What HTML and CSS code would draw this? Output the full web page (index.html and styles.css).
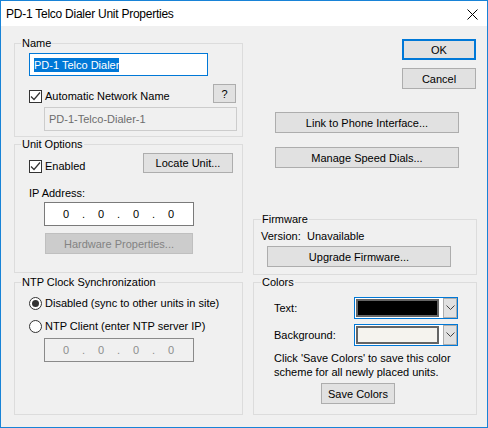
FILE: index.html
```
<!DOCTYPE html>
<html lang="en">
<head>
    <meta charset="UTF-8">
    <title>PD-1 Telco Dialer Unit Properties</title>
    <link rel="stylesheet" href="styles.css">
</head>
<body>

<div class="window">
    <div class="titlebar">
        <span class="title">PD-1 Telco Dialer Unit Properties</span>
        <span class="close">
            <svg width="11" height="11" viewBox="0 0 11 11"><path d="M0.5 0.5 L10.5 10.5 M10.5 0.5 L0.5 10.5" stroke="#000" stroke-width="1" fill="none"/></svg>
        </span>
    </div>

    <div class="content">
        <div class="col left">
            <div class="group name-group">
                <div class="group-title">Name</div>
                <div class="textbox name-input"><span class="selected">PD-1 Telco Dialer</span></div>
                <div class="auto-row">
                    <label class="check">
                        <span class="box"><svg width="11" height="11" viewBox="0 0 11 11"><path d="M1 5.5 L4 8.5 L10 1.5" stroke="#333" stroke-width="1.2" fill="none"/></svg></span>
                        Automatic Network Name
                    </label>
                    <button class="btn help-btn">?</button>
                </div>
                <div class="textbox readonly net-name">PD-1-Telco-Dialer-1</div>
            </div>

            <div class="group unit-group">
                <div class="group-title">Unit Options</div>
                <div class="unit-row">
                    <label class="check">
                        <span class="box"><svg width="11" height="11" viewBox="0 0 11 11"><path d="M1 5.5 L4 8.5 L10 1.5" stroke="#333" stroke-width="1.2" fill="none"/></svg></span>
                        Enabled
                    </label>
                    <button class="btn locate-btn">Locate Unit...</button>
                </div>
                <div class="ip-label">IP Address:</div>
                <div class="textbox ip-box">
                    <span class="oct">0</span><span class="dot">.</span><span class="oct">0</span><span class="dot">.</span><span class="oct">0</span><span class="dot">.</span><span class="oct">0</span>
                </div>
                <button class="btn disabled hw-btn">Hardware Properties...</button>
            </div>

            <div class="group ntp-group">
                <div class="group-title">NTP Clock Synchronization</div>
                <label class="radio first"><span class="circle on"></span>Disabled (sync to other units in site)</label>
                <label class="radio second"><span class="circle"></span>NTP Client (enter NTP server IP)</label>
                <div class="textbox ip-box off">
                    <span class="oct">0</span><span class="dot">.</span><span class="oct">0</span><span class="dot">.</span><span class="oct">0</span><span class="dot">.</span><span class="oct">0</span>
                </div>
            </div>
        </div>

        <div class="col side">
            <button class="btn default ok-btn">OK</button>
            <button class="btn cancel-btn">Cancel</button>
            <button class="btn wide link-btn">Link to Phone Interface...</button>
            <button class="btn wide speed-btn">Manage Speed Dials...</button>

            <div class="group firmware-group">
                <div class="group-title">Firmware</div>
                <div class="version"><span class="version-label">Version:</span>Unavailable</div>
                <button class="btn wide upgrade-btn">Upgrade Firmware...</button>
            </div>

            <div class="group colors-group">
                <div class="group-title">Colors</div>
                <div class="color-row">
                    <span class="color-label">Text:</span>
                    <span class="combo">
                        <span class="swatch" style="background:#000000"></span>
                        <span class="drop"><svg width="9" height="6" viewBox="0 0 9 6"><path d="M0.5 0.5 L4.5 4.5 L8.5 0.5" stroke="#444" stroke-width="1" fill="none"/></svg></span>
                    </span>
                </div>
                <div class="color-row second">
                    <span class="color-label">Background:</span>
                    <span class="combo">
                        <span class="swatch" style="background:#f5f3ee"></span>
                        <span class="drop"><svg width="9" height="6" viewBox="0 0 9 6"><path d="M0.5 0.5 L4.5 4.5 L8.5 0.5" stroke="#444" stroke-width="1" fill="none"/></svg></span>
                    </span>
                </div>
                <p class="hint">Click 'Save Colors' to save this color<br>scheme for all newly placed units.</p>
                <button class="btn save-btn">Save Colors</button>
            </div>
        </div>
    </div>
</div>

</body>
</html>
```

FILE: styles.css
```
body {
    margin: 0;
    font-family: 'Liberation Sans', Arial, sans-serif;
    font-size: 11px;
    color: #000;
}
.window {
    width: 488px;
    height: 428px;
    box-sizing: border-box;
    border: 1px solid #1883d7;
    background-color: #f0f0f0;
}
.titlebar {
    height: 25px;
    background-color: #fff;
    display: flex;
    align-items: center;
    justify-content: space-between;
}
.titlebar .title {
    font-size: 12px;
    letter-spacing: -0.25px;
    padding-left: 5px;
}
.titlebar .close {
    display: flex;
    margin-right: 9px;
    margin-top: 1px;
}
.content {
    display: flex;
    gap: 10px;
    padding-left: 13px;
}
.col {
    display: flex;
    flex-direction: column;
}
.left {
    width: 229px;
}
.side {
    width: 224px;
}

/* group boxes */
.group {
    box-sizing: border-box;
    border: 1px solid #dcdcdc;
}
.group-title {
    margin: -7px 0 0 6px;
    padding: 0 1px;
    line-height: 13px;
    width: max-content;
    background-color: #f0f0f0;
}
.side .group-title {
    margin-left: 7px;
}

/* buttons */
.btn {
    box-sizing: border-box;
    font-family: inherit;
    font-size: 11px;
    color: #000;
    background-color: #e1e1e1;
    border: 1px solid #adadad;
    padding: 0;
    height: 21px;
}
.btn.default {
    border: 2px solid #0078d7;
}
.btn.disabled {
    background-color: #cccccc;
    border-color: #bfbfbf;
    color: #838383;
}
.btn.wide {
    width: 184px;
}

/* text boxes */
.textbox {
    box-sizing: border-box;
    border: 1px solid #7a7a7a;
    background-color: #fff;
    display: flex;
    align-items: center;
}
.textbox.readonly {
    background-color: #f0f0f0;
    border-color: #cccccc;
    color: #6d6d6d;
    padding-left: 4px;
}

/* check boxes and radios */
.check, .radio {
    display: flex;
    align-items: center;
    line-height: 13px;
}
.check .box {
    box-sizing: border-box;
    width: 13px;
    height: 13px;
    border: 1px solid #333;
    background-color: #fff;
    margin-right: 3px;
    display: flex;
}
.radio .circle {
    box-sizing: border-box;
    width: 13px;
    height: 13px;
    border: 1px solid #333;
    border-radius: 50%;
    background-color: #fff;
    margin-right: 3px;
    display: flex;
    align-items: center;
    justify-content: center;
}
.radio .circle.on::after {
    content: '';
    width: 7px;
    height: 7px;
    border-radius: 50%;
    background-color: #333;
}

/* name */
.name-group {
    margin-top: 17px;
    height: 94px;
}
.name-input {
    margin: 3px 0 0 14px;
    width: 179px;
    height: 23px;
    border-color: #0078d7;
    padding-left: 4px;
}
.name-input .selected {
    background-color: #0078d7;
    color: #fff;
    line-height: 14px;
}
.auto-row {
    display: flex;
    align-items: flex-start;
    height: 19px;
    margin-top: 8px;
}
.auto-row .check {
    margin: 6px 0 0 14px;
}
.help-btn {
    width: 23px;
    height: 19px;
    margin-left: auto;
    margin-right: 6px;
}
.net-name {
    margin: 4px 0 0 29px;
    width: 193px;
    height: 24px;
}

/* unit options */
.unit-group {
    margin-top: 7px;
    height: 129px;
}
.unit-row {
    display: flex;
    align-items: flex-start;
    margin-top: 2px;
}
.unit-row .check {
    margin: 7px 0 0 14px;
}
.locate-btn {
    width: 90px;
    height: 20px;
    margin-left: auto;
    margin-right: 9px;
}
.ip-label {
    margin: 14px 0 0 14px;
    line-height: 13px;
}
.ip-box {
    margin: 2px 0 0 29px;
    width: 150px;
    height: 24px;
    padding-left: 11px;
}
.ip-box .oct {
    width: 20px;
    text-align: center;
}
.ip-box .dot {
    width: 15px;
    text-align: center;
}
.ip-box.off {
    background-color: #f0f0f0;
    border-color: #8a8a8a;
    color: #8d8d8d;
}
.hw-btn {
    margin: 7px 0 0 30px;
    width: 148px;
}

/* ntp */
.ntp-group {
    margin-top: 9px;
    height: 133px;
}
.radio {
    margin-left: 14px;
}
.radio.first {
    margin-top: 8px;
}
.radio.second {
    margin-top: 10px;
}
.ntp-group .ip-box {
    margin-top: 5px;
}

/* right side */
.ok-btn, .cancel-btn {
    width: 74px;
    align-self: flex-end;
    margin-right: 1px;
}
.ok-btn {
    margin-top: 13px;
}
.cancel-btn {
    margin-top: 8px;
}
.link-btn {
    margin: 23px 0 0 22px;
}
.speed-btn {
    margin: 14px 0 0 22px;
}
.firmware-group {
    margin-top: 51px;
    height: 56px;
}
.version {
    margin: 4px 0 0 7px;
    line-height: 13px;
}
.version-label {
    display: inline-block;
    width: 46px;
}
.upgrade-btn {
    margin: 3px 0 0 13px;
}

/* colors */
.colors-group {
    margin-top: 7px;
    height: 133px;
}
.color-row {
    display: flex;
    align-items: center;
    margin: 8px 0 0 20px;
}
.color-row.second {
    margin-top: 5px;
}
.color-label {
    width: 80px;
}
.combo {
    box-sizing: border-box;
    width: 104px;
    height: 22px;
    border: 1px solid #0078d7;
    background-color: #fff;
    display: flex;
}
.combo .swatch {
    box-sizing: border-box;
    width: 83px;
    height: 18px;
    margin: 1px 0 0 1px;
    border: 2px solid #646464;
}
.combo .drop {
    box-sizing: border-box;
    width: 14px;
    height: 20px;
    margin-left: auto;
    background-color: #e1e1e1;
    border: 1px solid #adadad;
    display: flex;
    align-items: center;
    justify-content: center;
}
.hint {
    margin: 5px 0 0 20px;
    line-height: 14px;
}
.save-btn {
    margin: 4px 0 0 67px;
    width: 74px;
}
```
